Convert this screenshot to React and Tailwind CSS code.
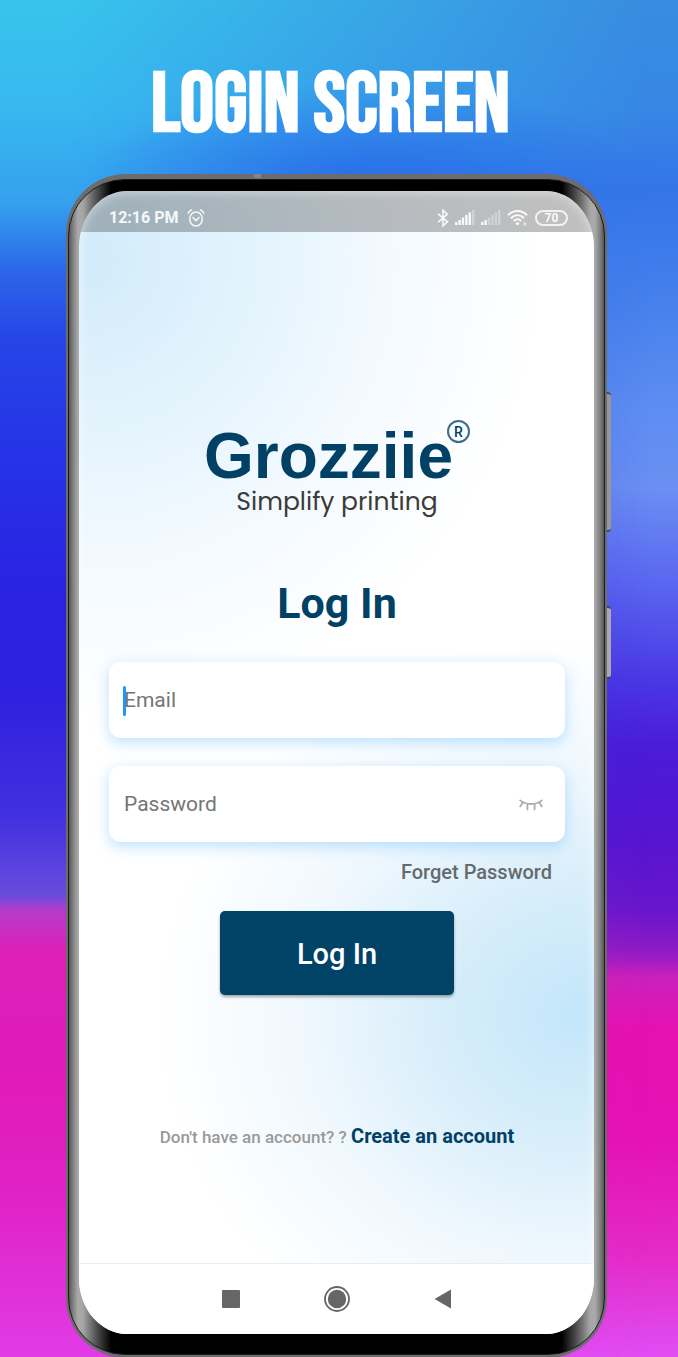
import React from "react";

function AlarmIcon() {
  return (
    <svg viewBox="0 0 18 20" className="h-5 w-[18px]" fill="none" stroke="currentColor" strokeWidth="1.5" strokeLinecap="round" aria-hidden="true">
      <ellipse cx="9" cy="11" rx="6.3" ry="7" />
      <path d="M6 9.5 9 12.6 12.2 9.5" />
      <path d="M1.2 5.2C1.8 3.6 3 2.5 4.6 2.1M16.8 5.2C16.2 3.6 15 2.5 13.4 2.1" />
    </svg>
  );
}

function BluetoothIcon() {
  return (
    <svg viewBox="0 0 12 18" className="h-[18px] w-3" fill="none" stroke="currentColor" strokeWidth="1.6" aria-hidden="true">
      <path d="M1.2 4.8 10.4 12.8 6 16.8V1.2L10.4 5.2 1.2 13.2" />
    </svg>
  );
}

function SignalIcon({ strong }) {
  const bars = [3, 5, 7.5, 10, 12.5, 15];
  return (
    <svg viewBox="0 0 20 16" className="h-4 w-5" fill="currentColor" aria-hidden="true">
      {bars.map((h, i) => (
        <rect key={h} x={i * 3.4} y={15 - h} width="2.4" height={h} opacity={i < strong ? 1 : 0.35} />
      ))}
    </svg>
  );
}

function WifiIcon() {
  return (
    <svg viewBox="0 0 22 18" className="h-[18px] w-[22px]" fill="none" stroke="currentColor" strokeWidth="2" aria-hidden="true">
      <path d="M1 6.2C6.5.6 14.5.6 20 6.2" />
      <path d="M3.9 9.2C8 5.2 13 5.2 17.1 9.2" />
      <path d="M6.8 12C9.2 9.8 11.8 9.8 14.2 12" />
      <circle cx="10.5" cy="14.6" r="1.7" fill="currentColor" stroke="none" />
      <circle cx="17.8" cy="15" r="2" fill="currentColor" stroke="none" opacity="0.5" />
    </svg>
  );
}

function ClosedEyeIcon() {
  return (
    <svg viewBox="0 0 24 14" className="h-[14px] w-6" fill="none" stroke="#adadad" strokeWidth="1.8" strokeLinecap="round" aria-hidden="true">
      <path d="M1.2 2.4C6.5 7.2 17.5 7.2 22.8 2.4" />
      <path d="M3.8 4.4 1.2 8.4M20.2 4.4 22.8 8.4M8.4 6.4V11.4M15.6 6.4V11.4" />
    </svg>
  );
}

function StatusBar() {
  return (
    <header className="flex h-[41px] items-center justify-between bg-black/25 pt-3 pr-[26px] pl-[30px] text-white/90">
      <div className="flex items-center gap-2">
        <span className="text-base leading-5 font-bold">12:16 PM</span>
        <AlarmIcon />
      </div>
      <div className="flex items-center gap-[6px]">
        <BluetoothIcon />
        <SignalIcon strong={5} />
        <SignalIcon strong={2} />
        <WifiIcon />
        <span className="flex h-4 w-[33px] items-center justify-center rounded-full border-2 border-white/80 text-xs leading-3 font-bold">70</span>
      </div>
    </header>
  );
}

function Logo() {
  return (
    <div className="flex flex-col items-center text-[#024166]">
      <div className="flex items-start">
        <span className="pt-1 font-['Liberation_Sans',sans-serif] text-[64px] leading-[64px] font-bold">Grozziie</span>
        <span className="-ml-[6px] flex size-[23px] items-center justify-center rounded-full border-2 border-[#3a6d8b] text-sm leading-4 font-medium">R</span>
      </div>
      <p className="font-[Poppins,Lato,sans-serif] text-[25px] leading-7 text-[#3b3b3b]">Simplify printing</p>
    </div>
  );
}

const fieldClass =
  "h-[76px] w-full rounded-xl bg-white px-[15px] text-[21px] text-[#555] placeholder-[#757575] shadow-[0_4px_14px_rgba(120,195,255,0.5)] outline-none";

function LoginForm() {
  return (
    <form className="flex flex-col" onSubmit={(e) => e.preventDefault()}>
      <div className="relative">
        <input type="email" aria-label="Email" placeholder="Email" className={fieldClass} />
        <span className="absolute top-6 left-[14px] h-[30px] w-[3px] rounded-full bg-[#2196f3]" />
      </div>
      <div className="relative mt-7">
        <input type="password" aria-label="Password" placeholder="Password" className={fieldClass} />
        <button type="button" aria-label="Show password" className="absolute top-8 right-[22px]">
          <ClosedEyeIcon />
        </button>
      </div>
      <a href="#forgot" className="mt-4 mr-[13px] self-end text-xl leading-7 font-medium text-[#656a6e]">
        Forget Password
      </a>
      <button type="submit" className="mt-[25px] h-[84px] w-[234px] self-center rounded-[5px] bg-[#004366] pt-1 text-[29px] font-medium text-white shadow-[0_2px_3px_rgba(0,0,0,0.35)]">
        Log In
      </button>
    </form>
  );
}

function NavBar() {
  return (
    <nav className="flex h-[71px] items-center justify-center gap-[84px] border-t border-[#ececee] bg-white text-[#666]">
      <button type="button" aria-label="Recent apps">
        <svg viewBox="0 0 18 18" className="size-[18px]"><rect width="18" height="18" rx="1" fill="currentColor" /></svg>
      </button>
      <button type="button" aria-label="Home">
        <svg viewBox="0 0 26 26" className="size-[26px]" fill="currentColor">
          <circle cx="13" cy="13" r="12" fill="none" stroke="currentColor" strokeWidth="1.8" />
          <circle cx="13" cy="13" r="9.2" />
        </svg>
      </button>
      <button type="button" aria-label="Back">
        <svg viewBox="0 0 18 20" className="h-5 w-[18px]"><path d="M17 .5v19L.5 10Z" fill="currentColor" /></svg>
      </button>
    </nav>
  );
}

function Phone() {
  return (
    <div className="relative rounded-[60px] bg-[#6c6c6e] px-[2px] pt-[5px] pb-[3px]">
      <span className="absolute top-[218px] -right-1 h-[140px] w-1 rounded-r-sm border-y-2 border-[#444] bg-[#98969b]" />
      <span className="absolute top-[432px] -right-1 h-[73px] w-1 rounded-r-sm border-y-2 border-[#444] bg-[#aaa8b0]" />
      <span className="absolute top-0 left-[188px] h-1 w-[7px] bg-[#858587]" />
      <div className="rounded-[57px] border border-[#1c1c1c] bg-[linear-gradient(to_right,transparent_14px,#000_42px,#000_calc(100%-42px),transparent_calc(100%-14px)),linear-gradient(to_right,#555,#777_3px,#aaa_9px,#999_30px,#999_calc(100%-30px),#aaa_calc(100%-9px),#777_calc(100%-3px),#555)] px-[10px] pt-[11px] pb-[20px]">
        <div className="relative overflow-hidden rounded-[48px/56px] bg-white bg-[radial-gradient(ellipse_88%_40%_at_2%_6%,#d2ebfa,#e4f4fd_38%,#f4faff_68%,transparent),radial-gradient(ellipse_82%_33%_at_97%_72%,#c3e6fa,#d8eefa_34%,#f0f8fe_66%,transparent)]">
          <StatusBar />
          <main className="flex flex-col pr-[29px] pl-[30px]">
            <div className="mt-[188px]">
              <Logo />
            </div>
            <h1 className="mt-[59px] mb-[31px] text-center text-[43px] leading-[56px] font-bold text-[#024166]">Log In</h1>
            <LoginForm />
            <p className="mt-[127px] mb-[112px] text-center text-[17px] leading-7 font-medium text-[#999]">
              Don't have an account? ?{" "}
              <a href="#signup" className="text-xl font-bold text-[#024166]">Create an account</a>
            </p>
          </main>
          <NavBar />
          <div className="pointer-events-none absolute inset-0 rounded-[48px/56px] shadow-[inset_0_0_12px_rgba(255,255,255,0.6)]" />
        </div>
      </div>
    </div>
  );
}

export default function App() {
  return (
    <div className="relative min-h-screen overflow-hidden bg-[linear-gradient(to_bottom,#398ce0_0%,#3787e4_8%,#3474e9_14%,#4580ec_22%,#5d8df1_30%,#6a8ff2_36%,#5a66f0_43%,#4a38e4_50%,#4a1cd8_55%,#5714d0_62%,#6915cb_67%,#8d1bc6_70%,#cb20bb_72%,#e511b1_76%,#e512b3_84%,#e429c6_92%,#e04ef4_100%)] font-[Roboto,sans-serif]">
      <div className="absolute inset-0 bg-[linear-gradient(to_bottom,#37c4eb_0%,#37b8ef_8%,#35a0ee_15%,#2c65e9_20%,#2645e7_25%,#2534e6_33%,#2a22e2_44%,#3022de_52%,#4130e0_60%,#6a4cdc_66%,#b43cca_67%,#dc20b8_70%,#e01bb8_80%,#e022c6_88%,#e03be6_100%)] [mask-image:linear-gradient(to_right,black_0%,black_10%,transparent_96%)]" />
      <div className="absolute inset-0 bg-[radial-gradient(ellipse_42%_8%_at_54%_14%,rgba(38,98,232,0.8),transparent)]" />
      <div className="relative pr-[71px] pl-[66px]">
        <h2 className="flex h-[174px] items-center justify-center pt-9 pr-3 font-['Bebas_Neue','Liberation_Sans_Narrow',Roboto,sans-serif] text-[85px] leading-none font-bold whitespace-nowrap text-white">
          LOGIN SCREEN
        </h2>
        <Phone />
      </div>
    </div>
  );
}
